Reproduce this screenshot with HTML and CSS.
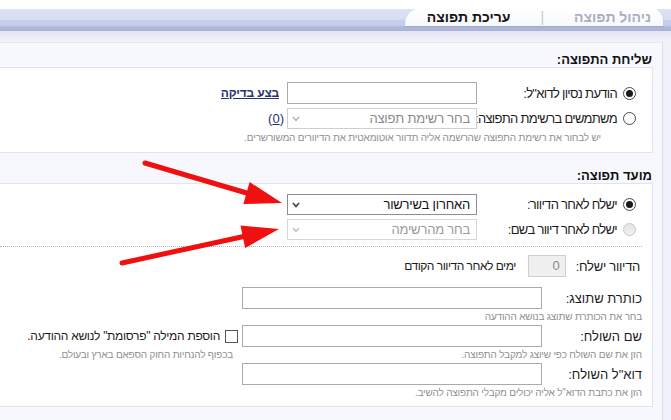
FILE: index.html
```html
<!DOCTYPE html>
<html lang="he" dir="rtl">
<head>
<meta charset="utf-8">
<title>עריכת תפוצה</title>
<link rel="stylesheet" href="styles.css">
</head>
<body>
<div class="top">
  <div class="bar">
    <div class="tab">
      <span class="tab-item tab-muted">ניהול תפוצה</span>
      <span class="tab-sep">|</span>
      <span class="tab-item tab-active">עריכת תפוצה</span>
    </div>
  </div>
</div>
<div class="substrip"></div>
<div class="content">
  <div class="frame">
    <section class="sec">
      <div class="sec-head">שליחת התפוצה:</div>
      <div class="box box-send">
        <div class="row row-input">
          <span class="radio checked"></span>
          <span class="rlabel">הודעת נסיון לדוא"ל:</span>
          <span class="input"></span>
          <a class="link">בצע בדיקה</a>
        </div>
        <div class="row row-select">
          <span class="radio"></span>
          <span class="rlabel">משתמשים ברשימת התפוצה:</span>
          <span class="select select-light">
            <span class="sel-text">בחר רשימת תפוצה</span>
            <svg class="chev" width="8" height="6" viewBox="0 0 8 6"><polyline points="1,1 4,4.5 7,1" fill="none" stroke="#b0b0b0" stroke-width="1.3"/></svg>
          </span>
          <span class="count">(<u>0</u>)</span>
        </div>
        <div class="hint hint-send">יש לבחור את רשימת התפוצה שהרשמה אליה תדוור אוטומאטית את הדיוורים המשורשרים.</div>
      </div>
    </section>

    <section class="sec">
      <div class="sec-head">מועד תפוצה:</div>
      <div class="box box-time">
        <div class="row row-select">
          <span class="radio checked"></span>
          <span class="rlabel">ישלח לאחר הדיוור:</span>
          <span class="select select-active">
            <span class="sel-text">האחרון בשירשור</span>
            <svg class="chev" width="8" height="6" viewBox="0 0 8 6"><polyline points="1,1 4,4.5 7,1" fill="none" stroke="#444" stroke-width="1.7"/></svg>
          </span>
        </div>
        <div class="row row-select row-gap">
          <span class="radio disabled"></span>
          <span class="rlabel">ישלח לאחר דיוור בשם:</span>
          <span class="select select-disabled">
            <span class="sel-text">בחר מהרשימה</span>
            <svg class="chev" width="8" height="6" viewBox="0 0 8 6"><polyline points="1,1 4,4.5 7,1" fill="none" stroke="#bbb" stroke-width="1.3"/></svg>
          </span>
        </div>
        <div class="dotted"></div>
        <div class="row row-days">
          <span class="days-label">הדיוור ישלח:</span>
          <span class="days-input">0</span>
          <span class="days-text">ימים לאחר הדיוור הקודם</span>
        </div>

        <div class="field field-first">
          <div class="frow">
            <span class="flabel">כותרת שתוצג:</span>
            <span class="finput"></span>
          </div>
          <div class="fhints"><span class="fhint">בחר את הכותרת שתוצג בנושא ההודעה</span></div>
        </div>
        <div class="field">
          <div class="frow">
            <span class="flabel">שם השולח:</span>
            <span class="finput"></span>
            <span class="chk"></span>
            <span class="chk-text">הוספת המילה "פרסומת" לנושא ההודעה.</span>
          </div>
          <div class="fhints">
            <span class="fhint">הזן את שם השולח כפי שיוצג למקבל התפוצה.</span>
            <span class="fhint fhint-extra">בכפוף להנחיות החוק הספאם בארץ ובעולם.</span>
          </div>
        </div>
        <div class="field">
          <div class="frow">
            <span class="flabel">דוא"ל השולח:</span>
            <span class="finput"></span>
          </div>
          <div class="fhints"><span class="fhint">הזן את כתבת הדוא"ל אליה יכולים מקבלי התפוצה להשיב.</span></div>
        </div>
      </div>
    </section>
  </div>
</div>

<svg class="arrows" width="671" height="420" viewBox="0 0 671 420">
  <line x1="145" y1="163" x2="250" y2="194" stroke="#f01010" stroke-width="5" stroke-linecap="round"/>
  <polygon points="282,203 249.6,182 243.4,204" fill="#f01010"/>
  <line x1="122" y1="263" x2="246" y2="236" stroke="#f01010" stroke-width="5" stroke-linecap="round"/>
  <polygon points="279,229 240.5,225.5 245.1,248" fill="#f01010"/>
</svg>
</body>
</html>
```

FILE: styles.css
```css
* { box-sizing: border-box; }
html, body { margin: 0; padding: 0; }
body {
  position: relative;
  width: 671px;
  height: 420px;
  overflow: hidden;
  direction: rtl;
  background: #f0f2fa;
  font-family: "Liberation Sans", Arial, "DejaVu Sans", sans-serif;
  font-size: 13px;
  letter-spacing: -0.4px;
  color: #1c1c1c;
}

/* ---------- tab bar ---------- */
.top { background: #fff; padding-top: 9px; }
.bar {
  height: 22px;
  display: flex;
  background: linear-gradient(#dde1f4 0, #d7dcf1 50%, #c8cfec 52%, #c4cbea 76%, #b1b9dc 80%, #aab2d8 100%);
}
.tab {
  margin-top: -1px;
  margin-right: 8px;
  height: 18px;
  background: linear-gradient(#ffffff, #f7f8fc);
  border-radius: 16px 12px 0 0 / 16px 14px 0 0;
  box-shadow: 0 1px 1px rgba(120, 130, 170, 0.35);
  display: flex;
  align-items: center;
  gap: 30px;
  padding: 0 12px 0 22px;
  font-size: 14px;
  font-weight: bold;
  line-height: 17px;
  letter-spacing: 0;
}
.tab-muted { color: #a9aec0; }
.tab-active { color: #151515; }
.tab-sep { color: #c3c7d4; font-weight: normal; }
.substrip { height: 11px; background: linear-gradient(#e2e6f3, #f1f3fa); }

/* ---------- frame and sections ---------- */
.content { padding-right: 8px; }
.frame {
  background: #f7f8fd;
  border-top: 1px solid #e4e7f1;
  border-right: 1px solid #d9ddea;
  height: 390px;
}
.sec-head {
  padding: 10px 10px 0 0;
  line-height: 14px;
  font-size: 13px;
  font-weight: bold;
  letter-spacing: 0;
  color: #111;
}
.box {
  background: #fff;
  border: 1px solid #e1e4ee;
  border-left: 0;
  margin-right: 9px;
  margin-bottom: 6px;
}
.box-send { padding: 14px 16px 8px 0; }
.box-time { padding: 10px 0 7px 0; }
.box-time .row-select { padding-right: 16px; }

.row { display: flex; align-items: center; }
.row-input { height: 22px; }
.row-select { height: 21px; margin-top: 4px; }
.box-time .row-select:first-child { margin-top: 0; }

/* ---------- radio ---------- */
.radio {
  flex: none;
  width: 13px;
  height: 13px;
  border-radius: 50%;
  border: 1px solid #4a4a4a;
  background: #fff;
  margin-left: 6px;
  display: flex;
  align-items: center;
  justify-content: center;
}
.radio.checked::after {
  content: "";
  width: 7px;
  height: 7px;
  border-radius: 50%;
  background: #1a1a1a;
}
.radio.disabled { border-color: #c6c6c6; background: linear-gradient(#e4e4e4, #f0f0f0); }

.rlabel { flex: none; width: 140px; line-height: 15px; white-space: nowrap; letter-spacing: -0.7px; }

/* ---------- controls ---------- */
.input {
  flex: none;
  width: 190px;
  height: 22px;
  border: 1px solid #aaaaaa;
  background: #fff;
}
.select {
  flex: none;
  width: 190px;
  height: 21px;
  border: 1px solid #cfcfcf;
  background: #fff;
  display: flex;
  align-items: center;
  justify-content: space-between;
  padding: 0 6px 0 4px;
  color: #8a8a8a;
  letter-spacing: -0.2px;
}
.select-active { border-color: #8e8e8e; color: #111; }
.select-disabled { border-color: #d6d6d6; color: #9a9a9a; }
.chev { flex: none; display: block; }

.link {
  margin-right: 8px;
  color: #27336a;
  font-size: 12px;
  font-weight: bold;
  letter-spacing: -0.2px;
  text-decoration: underline;
  white-space: nowrap;
}
.count { margin-right: 3px; color: #27336a; letter-spacing: 0; }

.hint {
  font-size: 10px;
  line-height: 12px;
  letter-spacing: -0.2px;
  color: #8f8f8f;
  white-space: nowrap;
}
.hint-send { margin: 3px 35px 0 0; }

.dotted {
  margin: 6px 10px 0 0;
  border-top: 1px dotted #b5b5b5;
}

.row-days { height: 22px; margin-top: 8px; padding-right: 12px; }
.days-label { margin-left: 10px; letter-spacing: -0.3px; }
.days-input {
  width: 38px;
  height: 22px;
  border: 1px solid #cfcfcf;
  background: #f0f0f0;
  color: #8a8a8a;
  text-align: right;
  padding-right: 5px;
  line-height: 20px;
  letter-spacing: 0;
}
.days-text { margin-right: 12px; font-size: 12px; letter-spacing: -0.5px; }

/* ---------- fields ---------- */
.field { padding-right: 10px; margin-top: 2px; }
.field-first { margin-top: 10px; }
.frow { display: flex; align-items: center; height: 22px; }
.flabel { flex: none; width: 100px; letter-spacing: 0; }
.finput {
  flex: none;
  width: 300px;
  height: 22px;
  border: 1px solid #aaaaaa;
  background: #fff;
}
.chk {
  flex: none;
  width: 13px;
  height: 13px;
  border: 1px solid #555;
  background: #fff;
  margin-right: 4px;
}
.chk-text { margin-right: 5px; white-space: nowrap; font-size: 12px; letter-spacing: -0.3px; }
.fhints { display: flex; margin-top: 2px; }
.fhint {
  font-size: 10px;
  line-height: 12px;
  letter-spacing: -0.2px;
  color: #8f8f8f;
  white-space: nowrap;
}
.fhints .fhint:first-child { width: 400px; }
.fhint-extra { margin-right: 9px; }

/* ---------- annotation overlay ---------- */
.arrows { position: absolute; top: 0; left: 0; pointer-events: none; }
```
